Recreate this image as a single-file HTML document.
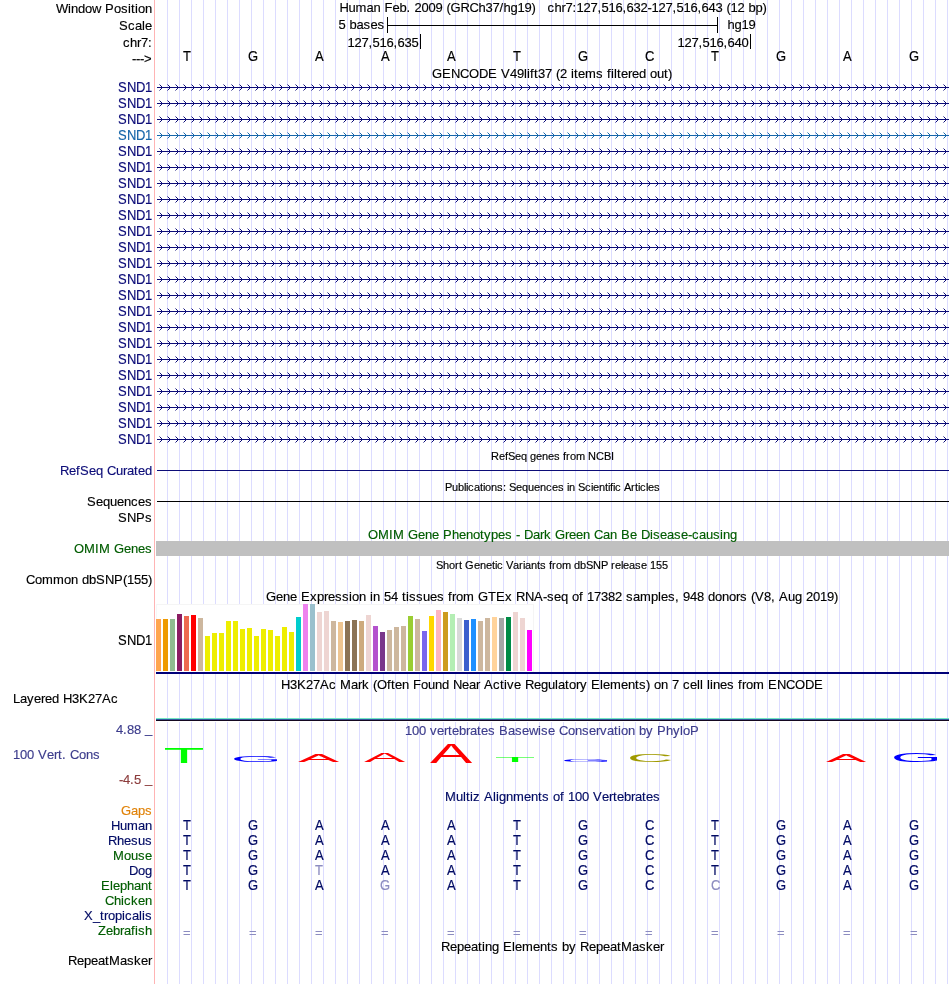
<!DOCTYPE html><html><head><meta charset="utf-8"><title>UCSC Genome Browser</title>
<style>html,body{margin:0;padding:0;background:#fff;overflow:hidden}svg{display:block}svg{font-family:"Liberation Sans", sans-serif;font-size:13px}text{white-space:pre;font-kerning:none;stroke-width:.15px;paint-order:stroke}svg{will-change:transform}</style></head><body>
<svg xml:space="preserve" width="950" height="984" viewBox="0 0 950 984">
<defs>
<pattern id="chevN" x="157" y="84" width="8" height="16" patternUnits="userSpaceOnUse"><path d="M2.5,0.5 L5.5,3.5 L2.5,6.5" fill="none" stroke="#0c0c78" stroke-width="1"/></pattern>
<pattern id="chevS" x="157" y="84" width="8" height="16" patternUnits="userSpaceOnUse"><path d="M2.5,0.5 L5.5,3.5 L2.5,6.5" fill="none" stroke="#1666aa" stroke-width="1"/></pattern>
</defs>
<rect x="0" y="0" width="950" height="984" fill="#fff"/>
<path d="M167.5,0V984M179.5,0V984M191.5,0V984M203.5,0V984M215.5,0V984M227.5,0V984M239.5,0V984M251.5,0V984M263.5,0V984M275.5,0V984M287.5,0V984M299.5,0V984M311.5,0V984M323.5,0V984M335.5,0V984M347.5,0V984M359.5,0V984M371.5,0V984M383.5,0V984M395.5,0V984M407.5,0V984M419.5,0V984M431.5,0V984M443.5,0V984M455.5,0V984M467.5,0V984M479.5,0V984M491.5,0V984M503.5,0V984M515.5,0V984M527.5,0V984M539.5,0V984M551.5,0V984M563.5,0V984M575.5,0V984M587.5,0V984M599.5,0V984M611.5,0V984M623.5,0V984M635.5,0V984M647.5,0V984M659.5,0V984M671.5,0V984M683.5,0V984M695.5,0V984M707.5,0V984M719.5,0V984M731.5,0V984M743.5,0V984M755.5,0V984M767.5,0V984M779.5,0V984M791.5,0V984M803.5,0V984M815.5,0V984M827.5,0V984M839.5,0V984M851.5,0V984M863.5,0V984M875.5,0V984M887.5,0V984M899.5,0V984M911.5,0V984M923.5,0V984M935.5,0V984M947.5,0V984" stroke="#dcdcff" stroke-width="1" fill="none" shape-rendering="crispEdges"/>
<rect x="154" y="0" width="1" height="984" fill="#ffb4b4"/>
<rect x="387" y="17" width="1" height="16" fill="#000"/>
<rect x="717" y="17" width="1" height="16" fill="#000"/>
<rect x="387" y="25" width="331" height="1" fill="#000"/>
<rect x="420" y="34" width="1" height="15" fill="#000"/>
<rect x="750" y="34" width="1" height="15" fill="#000"/>
<rect x="157" y="87" width="792" height="1" fill="#0c0c78"/>
<rect x="157" y="84" width="792" height="7" fill="url(#chevN)"/>
<rect x="157" y="103" width="792" height="1" fill="#0c0c78"/>
<rect x="157" y="100" width="792" height="7" fill="url(#chevN)"/>
<rect x="157" y="119" width="792" height="1" fill="#0c0c78"/>
<rect x="157" y="116" width="792" height="7" fill="url(#chevN)"/>
<rect x="157" y="135" width="792" height="1" fill="#1666aa"/>
<rect x="157" y="132" width="792" height="7" fill="url(#chevS)"/>
<rect x="157" y="151" width="792" height="1" fill="#0c0c78"/>
<rect x="157" y="148" width="792" height="7" fill="url(#chevN)"/>
<rect x="157" y="167" width="792" height="1" fill="#0c0c78"/>
<rect x="157" y="164" width="792" height="7" fill="url(#chevN)"/>
<rect x="157" y="183" width="792" height="1" fill="#0c0c78"/>
<rect x="157" y="180" width="792" height="7" fill="url(#chevN)"/>
<rect x="157" y="199" width="792" height="1" fill="#0c0c78"/>
<rect x="157" y="196" width="792" height="7" fill="url(#chevN)"/>
<rect x="157" y="215" width="792" height="1" fill="#0c0c78"/>
<rect x="157" y="212" width="792" height="7" fill="url(#chevN)"/>
<rect x="157" y="231" width="792" height="1" fill="#0c0c78"/>
<rect x="157" y="228" width="792" height="7" fill="url(#chevN)"/>
<rect x="157" y="247" width="792" height="1" fill="#0c0c78"/>
<rect x="157" y="244" width="792" height="7" fill="url(#chevN)"/>
<rect x="157" y="263" width="792" height="1" fill="#0c0c78"/>
<rect x="157" y="260" width="792" height="7" fill="url(#chevN)"/>
<rect x="157" y="279" width="792" height="1" fill="#0c0c78"/>
<rect x="157" y="276" width="792" height="7" fill="url(#chevN)"/>
<rect x="157" y="295" width="792" height="1" fill="#0c0c78"/>
<rect x="157" y="292" width="792" height="7" fill="url(#chevN)"/>
<rect x="157" y="311" width="792" height="1" fill="#0c0c78"/>
<rect x="157" y="308" width="792" height="7" fill="url(#chevN)"/>
<rect x="157" y="327" width="792" height="1" fill="#0c0c78"/>
<rect x="157" y="324" width="792" height="7" fill="url(#chevN)"/>
<rect x="157" y="343" width="792" height="1" fill="#0c0c78"/>
<rect x="157" y="340" width="792" height="7" fill="url(#chevN)"/>
<rect x="157" y="359" width="792" height="1" fill="#0c0c78"/>
<rect x="157" y="356" width="792" height="7" fill="url(#chevN)"/>
<rect x="157" y="375" width="792" height="1" fill="#0c0c78"/>
<rect x="157" y="372" width="792" height="7" fill="url(#chevN)"/>
<rect x="157" y="391" width="792" height="1" fill="#0c0c78"/>
<rect x="157" y="388" width="792" height="7" fill="url(#chevN)"/>
<rect x="157" y="407" width="792" height="1" fill="#0c0c78"/>
<rect x="157" y="404" width="792" height="7" fill="url(#chevN)"/>
<rect x="157" y="423" width="792" height="1" fill="#0c0c78"/>
<rect x="157" y="420" width="792" height="7" fill="url(#chevN)"/>
<rect x="157" y="439" width="792" height="1" fill="#0c0c78"/>
<rect x="157" y="436" width="792" height="7" fill="url(#chevN)"/>
<rect x="157" y="470" width="792" height="1" fill="#0c0c78"/>
<rect x="157" y="501" width="792" height="1" fill="#000"/>
<rect x="156" y="541" width="793" height="15" fill="#c0c0c0"/>
<rect x="156" y="604" width="378" height="68" fill="#fff"/>
<rect x="156" y="604" width="378" height="1" fill="#f5f5f5"/>
<rect x="533" y="604" width="1" height="68" fill="#f5f5f5"/>
<rect x="156" y="604" width="1" height="68" fill="#f5f8f8"/>
<rect x="156" y="619" width="5" height="52" fill="#ffa54f"/>
<rect x="163" y="619" width="5" height="52" fill="#ee9a00"/>
<rect x="170" y="619" width="5" height="52" fill="#8fbc8f"/>
<rect x="177" y="614" width="5" height="57" fill="#8b1c62"/>
<rect x="184" y="616" width="5" height="55" fill="#ee6a50"/>
<rect x="191" y="615" width="5" height="56" fill="#ff0000"/>
<rect x="198" y="618" width="5" height="53" fill="#cdb79e"/>
<rect x="205" y="636" width="5" height="35" fill="#eeee00"/>
<rect x="212" y="633" width="5" height="38" fill="#eeee00"/>
<rect x="219" y="633" width="5" height="38" fill="#eeee00"/>
<rect x="226" y="621" width="5" height="50" fill="#eeee00"/>
<rect x="233" y="621" width="5" height="50" fill="#eeee00"/>
<rect x="240" y="629" width="5" height="42" fill="#eeee00"/>
<rect x="247" y="628" width="5" height="43" fill="#eeee00"/>
<rect x="254" y="636" width="5" height="35" fill="#eeee00"/>
<rect x="261" y="629" width="5" height="42" fill="#eeee00"/>
<rect x="268" y="630" width="5" height="41" fill="#eeee00"/>
<rect x="275" y="636" width="5" height="35" fill="#eeee00"/>
<rect x="282" y="627" width="5" height="44" fill="#eeee00"/>
<rect x="289" y="632" width="5" height="39" fill="#eeee00"/>
<rect x="296" y="617" width="5" height="54" fill="#00cdcd"/>
<rect x="303" y="604" width="5" height="67" fill="#ee82ee"/>
<rect x="310" y="604" width="5" height="67" fill="#9ac0cd"/>
<rect x="317" y="612" width="5" height="59" fill="#eed5d2"/>
<rect x="324" y="611" width="5" height="60" fill="#eed5d2"/>
<rect x="331" y="621" width="5" height="50" fill="#cdb79e"/>
<rect x="338" y="622" width="5" height="49" fill="#eec591"/>
<rect x="345" y="621" width="5" height="50" fill="#8b7355"/>
<rect x="352" y="620" width="5" height="51" fill="#8b7355"/>
<rect x="359" y="621" width="5" height="50" fill="#cdaa7d"/>
<rect x="366" y="615" width="5" height="56" fill="#eed5d2"/>
<rect x="373" y="626" width="5" height="45" fill="#b452cd"/>
<rect x="380" y="632" width="5" height="39" fill="#7a378b"/>
<rect x="387" y="630" width="5" height="41" fill="#cdb79e"/>
<rect x="394" y="627" width="5" height="44" fill="#cdb79e"/>
<rect x="401" y="626" width="5" height="45" fill="#cdb79e"/>
<rect x="408" y="616" width="5" height="55" fill="#9acd32"/>
<rect x="415" y="619" width="5" height="52" fill="#cdb79e"/>
<rect x="422" y="631" width="5" height="40" fill="#7a67ee"/>
<rect x="429" y="616" width="5" height="55" fill="#ffd700"/>
<rect x="436" y="610" width="5" height="61" fill="#ffb6c1"/>
<rect x="443" y="612" width="5" height="59" fill="#cd9b1d"/>
<rect x="450" y="614" width="5" height="57" fill="#b4eeb4"/>
<rect x="457" y="618" width="5" height="53" fill="#d9d9d9"/>
<rect x="464" y="620" width="5" height="51" fill="#3a5fcd"/>
<rect x="471" y="619" width="5" height="52" fill="#1e90ff"/>
<rect x="478" y="621" width="5" height="50" fill="#cdb79e"/>
<rect x="485" y="618" width="5" height="53" fill="#cdb79e"/>
<rect x="492" y="617" width="5" height="54" fill="#ffd39b"/>
<rect x="499" y="618" width="5" height="53" fill="#a6a6a6"/>
<rect x="506" y="617" width="5" height="54" fill="#008b45"/>
<rect x="513" y="612" width="5" height="59" fill="#eed5d2"/>
<rect x="520" y="618" width="5" height="53" fill="#eed5d2"/>
<rect x="527" y="630" width="5" height="41" fill="#ff00ff"/>
<rect x="156" y="672" width="793" height="2" fill="#000078"/>
<rect x="156" y="718" width="793" height="1" fill="#74e6c4"/>
<rect x="156" y="719" width="793" height="1" fill="#3058a0"/>
<rect x="156" y="720" width="793" height="1" fill="#140820"/>
<rect x="156" y="721" width="793" height="1" fill="#fff"/>
<text transform="translate(163.49,763.00) scale(0.6721,0.2238)" font-size="100" fill="#00ff00">T</text>
<text transform="translate(230.69,762.31) scale(0.6587,0.0904)" font-size="100" fill="#0000ff">G</text>
<text transform="translate(297.88,762.40) scale(0.6183,0.1076)" font-size="100" fill="#ff0000">A</text>
<text transform="translate(363.88,762.40) scale(0.6183,0.1221)" font-size="100" fill="#ff0000">A</text>
<text transform="translate(429.88,763.00) scale(0.6334,0.2762)" font-size="100" fill="#ff0000">A</text>
<text transform="translate(494.49,762.00) scale(0.6721,0.0727)" font-size="100" fill="#00ff00">T</text>
<text transform="translate(560.69,762.26) scale(0.6587,0.0367)" font-size="100" fill="#0000ff">G</text>
<text transform="translate(626.71,762.09) scale(0.6474,0.1158)" font-size="100" fill="#a09a00">C</text>
<text transform="translate(825.88,762.20) scale(0.6032,0.1105)" font-size="100" fill="#ff0000">A</text>
<text transform="translate(890.69,762.37) scale(0.6587,0.1342)" font-size="100" fill="#0000ff">G</text>
<g transform="scale(1,1.05)" font-size="13">
<text x="56 68 71 78 85 92 101 105 114 121 128 131 135 138 145" y="12.38" stroke="#000">Window Position</text>
<text x="119 128 135 142 145" y="28.57" stroke="#000">Scale</text>
<text x="123 130 137 141 148" y="44.76" stroke="#000">chr7:</text>
<text x="339.5 348.5 355.5 366.5 373.5 380.5 384.5 392.5 399.5 406.5 410.5 414.5 421.5 428.5 435.5 442.5 446.5 450.5 460.5 469.5 478.5 485.5 492.5 499.5 503.5 510.5 517.5 524.5 531.5 535.5 539.5 543.5 547.5 554.5 561.5 565.5 572.5 576.5 583.5 590.5 597.5 601.5 608.5 615.5 622.5 626.5 633.5 640.5 647.5 651.5 658.5 665.5 672.5 676.5 683.5 690.5 697.5 701.5 708.5 715.5 722.5 726.5 730.5 737.5 744.5 748.5 755.5 762.5" y="11.43" stroke="#000">Human Feb. 2009 (GRCh37/hg19)   chr7:127,516,632-127,516,643 (12 bp)</text>
<text x="338.5 345.5 349.5 356.5 363.5 370.5 377.5" y="27.62" stroke="#000">5 bases</text>
<text x="727.5 734.5 741.5 748.5" y="27.62" stroke="#000">hg19</text>
<text x="432 442 451 460 469 479 488 497 501 510 517 524 527 530 534 538 545 552 556 560 567 571 574 578 585 596 603 607 611 614 617 621 628 632 639 646 650 657 664 668" y="74.29" stroke="#000">GENCODE V49lift37 (2 items filtered out)</text>
<text x="60 69 76 80 89 96 103 107 116 123 127 134 138 145" y="452.38" fill="#0c0c78" stroke="#0c0c78">RefSeq Curated</text>
<text x="87 96 103 110 117 124 131 138 145" y="481.90" stroke="#000">Sequences</text>
<text x="118 127 136 145" y="497.14" stroke="#000">SNPs</text>
<text x="368 378 389 393 404 408 418 425 432 439 443 452 459 466 473 480 484 491 498 505 512 516 520 524 533 540 544 551 555 565 569 576 583 590 594 603 610 617 621 630 637 641 650 653 660 667 674 681 688 692 699 706 713 720 723 730" y="513.33" fill="#005c00" stroke="#005c00">OMIM Gene Phenotypes - Dark Green Can Be Disease-causing</text>
<text x="74 84 95 99 110 114 124 131 138 145" y="526.67" fill="#005c00" stroke="#005c00">OMIM Genes</text>
<text x="26 35 42 53 64 71 78 82 89 96 105 114 123 127 134 141 148" y="556.19" stroke="#000">Common dbSNP(155)</text>
<text x="266 276 283 290 297 301 310 317 324 328 335 342 349 352 359 366 370 373 380 384 391 398 402 406 409 416 423 430 437 444 448 452 456 463 474 478 488 496 505 512 516 525 534 543 547 554 561 568 572 579 583 587 594 601 608 615 622 626 633 640 651 658 661 668 675 679 683 690 697 704 708 715 722 729 736 740 747 751 755 764 771 775 779 788 795 802 806 813 820 827 834" y="572.38" stroke="#000">Gene Expression in 54 tissues from GTEx RNA-seq of 17382 samples, 948 donors (V8, Aug 2019)</text>
<text x="281 290 297 306 313 320 329 336 340 351 358 362 369 373 377 387 391 395 402 409 413 421 428 435 442 449 453 462 469 476 480 484 493 500 504 507 514 521 525 534 541 548 555 558 565 569 576 580 587 591 600 603 610 621 628 635 639 646 650 654 661 668 672 679 683 690 697 700 703 707 710 713 720 727 734 738 742 746 753 764 768 777 786 795 805 814" y="656.19" stroke="#000">H3K27Ac Mark (Often Found Near Active Regulatory Elements) on 7 cell lines from ENCODE</text>
<text x="13 20 27 34 41 45 52 59 63 72 79 88 95 102 111" y="669.52" stroke="#000">Layered H3K27Ac</text>
<text x="405 412 419 426 430 437 444 448 452 459 466 470 477 481 488 495 499 508 515 522 529 538 541 548 555 559 568 575 582 589 596 600 607 614 618 621 628 635 639 646 653 657 666 673 680 683 690" y="700.00" fill="#3c3c8c" stroke="#3c3c8c">100 vertebrates Basewise Conservation by PhyloP</text>
<text x="13 20 27 34 38 47 54 58 62 66 70 79 86 93" y="722.86" fill="#3c3c8c" stroke="#3c3c8c">100 Vert. Cons</text>
<text x="445 456 463 466 470 473 480 484 493 496 499 506 513 524 531 538 542 549 553 560 564 568 575 582 589 593 602 609 613 617 624 631 635 642 646 653" y="762.86" fill="#000a64" stroke="#000a64">Multiz Alignments of 100 Vertebrates</text>
<text x="121 131 138 145" y="776.19" fill="#e08208" stroke="#e08208">Gaps</text>
<text x="111 120 127 138 145" y="790.48" fill="#000a64" stroke="#000a64">Human</text>
<text x="108 117 124 131 138 145" y="804.76" fill="#000a64" stroke="#000a64">Rhesus</text>
<text x="113 124 131 138 145" y="819.05" fill="#005c00" stroke="#005c00">Mouse</text>
<text x="129 138 145" y="833.33" fill="#000a64" stroke="#000a64">Dog</text>
<text x="101 110 113 120 127 134 141 148" y="847.62" fill="#005c00" stroke="#005c00">Elephant</text>
<text x="105 114 121 124 131 138 145" y="861.90" fill="#005c00" stroke="#005c00">Chicken</text>
<text x="84 93 100 104 108 115 122 125 132 139 142 145" y="876.19" fill="#000a64" stroke="#000a64">X_tropicalis</text>
<text x="98 106 113 120 124 131 135 138 145" y="890.48" fill="#005c00" stroke="#005c00">Zebrafish</text>
<text x="441 450 457 464 471 478 482 485 492 499 503 512 515 522 533 540 547 551 558 562 569 576 580 589 596 603 610 617 621 632 639 646 653 660" y="905.71" stroke="#000">Repeating Elements by RepeatMasker</text>
<text x="68 77 84 91 98 105 109 120 127 134 141 148" y="919.05" stroke="#000">RepeatMasker</text>
</g>
<g transform="scale(1,1.0)" font-size="13">
<text x="132 136 140 144" y="63.00" stroke="#000">---&gt;</text>
<text x="347.5 354.5 361.5 368.5 372.5 379.5 386.5 393.5 397.5 404.5 411.5" y="47.00" stroke="#000">127,516,635</text>
<text x="677.5 684.5 691.5 698.5 702.5 709.5 716.5 723.5 727.5 734.5 741.5" y="47.00" stroke="#000">127,516,640</text>
<text x="116 123 127 134 141" y="734.00" fill="#3c3c8c" stroke="#3c3c8c">4.88 </text>
<text x="145" y="733.00" fill="#3c3c8c" stroke="#3c3c8c">_</text>
<text x="119 123 130 134 141" y="784.00" fill="#8c3c3c" stroke="#8c3c3c">-4.5 </text>
<text x="145" y="783.00" fill="#8c3c3c" stroke="#8c3c3c">_</text>
<text x="183" y="937.00" fill="#8c8cc0" stroke="#8c8cc0">=</text>
<text x="249" y="937.00" fill="#8c8cc0" stroke="#8c8cc0">=</text>
<text x="315" y="937.00" fill="#8c8cc0" stroke="#8c8cc0">=</text>
<text x="381" y="937.00" fill="#8c8cc0" stroke="#8c8cc0">=</text>
<text x="447" y="937.00" fill="#8c8cc0" stroke="#8c8cc0">=</text>
<text x="513" y="937.00" fill="#8c8cc0" stroke="#8c8cc0">=</text>
<text x="579" y="937.00" fill="#8c8cc0" stroke="#8c8cc0">=</text>
<text x="645" y="937.00" fill="#8c8cc0" stroke="#8c8cc0">=</text>
<text x="711" y="937.00" fill="#8c8cc0" stroke="#8c8cc0">=</text>
<text x="777" y="937.00" fill="#8c8cc0" stroke="#8c8cc0">=</text>
<text x="843" y="937.00" fill="#8c8cc0" stroke="#8c8cc0">=</text>
<text x="910" y="937.00" fill="#8c8cc0" stroke="#8c8cc0">=</text>
</g>
<g transform="scale(1,1.1)" font-size="13">
<text x="183" y="55.45" stroke="#000">T</text>
<text x="248" y="55.45" stroke="#000">G</text>
<text x="315" y="55.45" stroke="#000">A</text>
<text x="381" y="55.45" stroke="#000">A</text>
<text x="447" y="55.45" stroke="#000">A</text>
<text x="513" y="55.45" stroke="#000">T</text>
<text x="578" y="55.45" stroke="#000">G</text>
<text x="645" y="55.45" stroke="#000">C</text>
<text x="711" y="55.45" stroke="#000">T</text>
<text x="776" y="55.45" stroke="#000">G</text>
<text x="843" y="55.45" stroke="#000">A</text>
<text x="909" y="55.45" stroke="#000">G</text>
<text x="118 127 136 145" y="83.64" fill="#0c0c78" stroke="#0c0c78">SND1</text>
<text x="118 127 136 145" y="98.18" fill="#0c0c78" stroke="#0c0c78">SND1</text>
<text x="118 127 136 145" y="112.73" fill="#0c0c78" stroke="#0c0c78">SND1</text>
<text x="118 127 136 145" y="127.27" fill="#1666aa" stroke="#1666aa">SND1</text>
<text x="118 127 136 145" y="141.82" fill="#0c0c78" stroke="#0c0c78">SND1</text>
<text x="118 127 136 145" y="156.36" fill="#0c0c78" stroke="#0c0c78">SND1</text>
<text x="118 127 136 145" y="170.91" fill="#0c0c78" stroke="#0c0c78">SND1</text>
<text x="118 127 136 145" y="185.45" fill="#0c0c78" stroke="#0c0c78">SND1</text>
<text x="118 127 136 145" y="200.00" fill="#0c0c78" stroke="#0c0c78">SND1</text>
<text x="118 127 136 145" y="214.55" fill="#0c0c78" stroke="#0c0c78">SND1</text>
<text x="118 127 136 145" y="229.09" fill="#0c0c78" stroke="#0c0c78">SND1</text>
<text x="118 127 136 145" y="243.64" fill="#0c0c78" stroke="#0c0c78">SND1</text>
<text x="118 127 136 145" y="258.18" fill="#0c0c78" stroke="#0c0c78">SND1</text>
<text x="118 127 136 145" y="272.73" fill="#0c0c78" stroke="#0c0c78">SND1</text>
<text x="118 127 136 145" y="287.27" fill="#0c0c78" stroke="#0c0c78">SND1</text>
<text x="118 127 136 145" y="301.82" fill="#0c0c78" stroke="#0c0c78">SND1</text>
<text x="118 127 136 145" y="316.36" fill="#0c0c78" stroke="#0c0c78">SND1</text>
<text x="118 127 136 145" y="330.91" fill="#0c0c78" stroke="#0c0c78">SND1</text>
<text x="118 127 136 145" y="345.45" fill="#0c0c78" stroke="#0c0c78">SND1</text>
<text x="118 127 136 145" y="360.00" fill="#0c0c78" stroke="#0c0c78">SND1</text>
<text x="118 127 136 145" y="374.55" fill="#0c0c78" stroke="#0c0c78">SND1</text>
<text x="118 127 136 145" y="389.09" fill="#0c0c78" stroke="#0c0c78">SND1</text>
<text x="118 127 136 145" y="403.64" fill="#0c0c78" stroke="#0c0c78">SND1</text>
<text x="118 127 136 145" y="586.36" stroke="#000">SND1</text>
<text x="183" y="754.55" fill="#000a64" stroke="#000a64">T</text>
<text x="248" y="754.55" fill="#000a64" stroke="#000a64">G</text>
<text x="315" y="754.55" fill="#000a64" stroke="#000a64">A</text>
<text x="381" y="754.55" fill="#000a64" stroke="#000a64">A</text>
<text x="447" y="754.55" fill="#000a64" stroke="#000a64">A</text>
<text x="513" y="754.55" fill="#000a64" stroke="#000a64">T</text>
<text x="578" y="754.55" fill="#000a64" stroke="#000a64">G</text>
<text x="645" y="754.55" fill="#000a64" stroke="#000a64">C</text>
<text x="711" y="754.55" fill="#000a64" stroke="#000a64">T</text>
<text x="776" y="754.55" fill="#000a64" stroke="#000a64">G</text>
<text x="843" y="754.55" fill="#000a64" stroke="#000a64">A</text>
<text x="909" y="754.55" fill="#000a64" stroke="#000a64">G</text>
<text x="183" y="768.18" fill="#000a64" stroke="#000a64">T</text>
<text x="248" y="768.18" fill="#000a64" stroke="#000a64">G</text>
<text x="315" y="768.18" fill="#000a64" stroke="#000a64">A</text>
<text x="381" y="768.18" fill="#000a64" stroke="#000a64">A</text>
<text x="447" y="768.18" fill="#000a64" stroke="#000a64">A</text>
<text x="513" y="768.18" fill="#000a64" stroke="#000a64">T</text>
<text x="578" y="768.18" fill="#000a64" stroke="#000a64">G</text>
<text x="645" y="768.18" fill="#000a64" stroke="#000a64">C</text>
<text x="711" y="768.18" fill="#000a64" stroke="#000a64">T</text>
<text x="776" y="768.18" fill="#000a64" stroke="#000a64">G</text>
<text x="843" y="768.18" fill="#000a64" stroke="#000a64">A</text>
<text x="909" y="768.18" fill="#000a64" stroke="#000a64">G</text>
<text x="183" y="781.82" fill="#000a64" stroke="#000a64">T</text>
<text x="248" y="781.82" fill="#000a64" stroke="#000a64">G</text>
<text x="315" y="781.82" fill="#000a64" stroke="#000a64">A</text>
<text x="381" y="781.82" fill="#000a64" stroke="#000a64">A</text>
<text x="447" y="781.82" fill="#000a64" stroke="#000a64">A</text>
<text x="513" y="781.82" fill="#000a64" stroke="#000a64">T</text>
<text x="578" y="781.82" fill="#000a64" stroke="#000a64">G</text>
<text x="645" y="781.82" fill="#000a64" stroke="#000a64">C</text>
<text x="711" y="781.82" fill="#000a64" stroke="#000a64">T</text>
<text x="776" y="781.82" fill="#000a64" stroke="#000a64">G</text>
<text x="843" y="781.82" fill="#000a64" stroke="#000a64">A</text>
<text x="909" y="781.82" fill="#000a64" stroke="#000a64">G</text>
<text x="183" y="795.45" fill="#000a64" stroke="#000a64">T</text>
<text x="248" y="795.45" fill="#000a64" stroke="#000a64">G</text>
<text x="315" y="795.45" fill="#8c8cc0" stroke="#8c8cc0">T</text>
<text x="381" y="795.45" fill="#000a64" stroke="#000a64">A</text>
<text x="447" y="795.45" fill="#000a64" stroke="#000a64">A</text>
<text x="513" y="795.45" fill="#000a64" stroke="#000a64">T</text>
<text x="578" y="795.45" fill="#000a64" stroke="#000a64">G</text>
<text x="645" y="795.45" fill="#000a64" stroke="#000a64">C</text>
<text x="711" y="795.45" fill="#000a64" stroke="#000a64">T</text>
<text x="776" y="795.45" fill="#000a64" stroke="#000a64">G</text>
<text x="843" y="795.45" fill="#000a64" stroke="#000a64">A</text>
<text x="909" y="795.45" fill="#000a64" stroke="#000a64">G</text>
<text x="183" y="809.09" fill="#000a64" stroke="#000a64">T</text>
<text x="248" y="809.09" fill="#000a64" stroke="#000a64">G</text>
<text x="315" y="809.09" fill="#000a64" stroke="#000a64">A</text>
<text x="380" y="809.09" fill="#8c8cc0" stroke="#8c8cc0">G</text>
<text x="447" y="809.09" fill="#000a64" stroke="#000a64">A</text>
<text x="513" y="809.09" fill="#000a64" stroke="#000a64">T</text>
<text x="578" y="809.09" fill="#000a64" stroke="#000a64">G</text>
<text x="645" y="809.09" fill="#000a64" stroke="#000a64">C</text>
<text x="711" y="809.09" fill="#8c8cc0" stroke="#8c8cc0">C</text>
<text x="776" y="809.09" fill="#000a64" stroke="#000a64">G</text>
<text x="843" y="809.09" fill="#000a64" stroke="#000a64">A</text>
<text x="909" y="809.09" fill="#000a64" stroke="#000a64">G</text>
</g>
<g transform="scale(1,1.04)" font-size="11">
<text x="491 499 505 508 515 521 527 530 536 542 548 554 560 563 566 570 576 585 588 596 604 611" y="442.31" stroke="#000">RefSeq genes from NCBI</text>
<text x="445 452 458 464 466 468 474 480 483 485 491 497 503 506 509 516 522 528 534 540 546 552 558 564 567 569 575 578 585 591 593 599 605 608 610 613 615 621 624 631 635 638 640 646 648 654" y="472.12" stroke="#000">Publications: Sequences in Scientific Articles</text>
<text x="436 443 449 455 459 462 465 474 480 486 492 495 497 503 506 513 519 523 525 531 537 540 546 549 552 556 562 571 574 580 586 593 601 608 611 615 621 623 629 635 641 647 650 656 662" y="547.12" stroke="#000">Short Genetic Variants from dbSNP release 155</text>
</g>
</svg></body></html>
